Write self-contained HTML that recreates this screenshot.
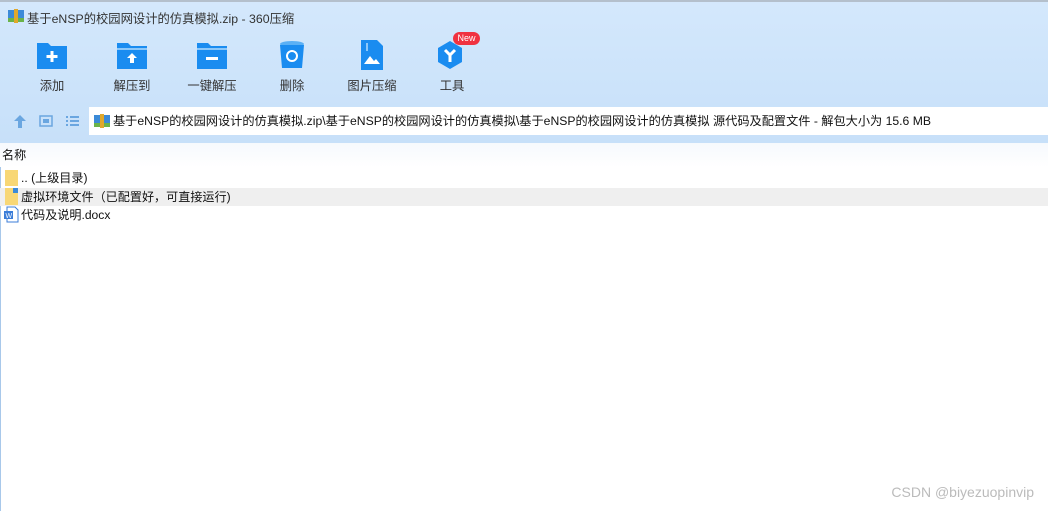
<!DOCTYPE html>
<html><head><meta charset="utf-8"><style>
*{margin:0;padding:0;box-sizing:border-box}
body{width:1048px;height:511px;overflow:hidden;background:#fff;font-family:"Liberation Sans","Noto Sans CJK SC",sans-serif;font-size:12px;color:#222;position:relative}
.top{position:absolute;left:0;top:0;width:1048px;height:143px;background:linear-gradient(#d4e8fc,#c7e0f9)}
.topline{position:absolute;left:0;top:0;width:1048px;height:2px;background:#b4c0cc}
.title{position:absolute;left:27px;top:9px;font-size:12.3px;color:#333}
.tb{position:absolute;top:40px;width:80px;text-align:center;font-size:12.3px;color:#333}
.tb svg{display:block;margin:0 auto 6px}
.addr{position:absolute;left:89px;top:107px;width:959px;height:28px;background:#fff;font-size:12.2px;line-height:28px;padding-left:24px;color:#111}
.hdr{position:absolute;left:0;top:143px;width:1048px;height:24px;background:linear-gradient(#f6f9fd,#fff)}
.row{position:absolute;left:0;height:18px;line-height:18px;font-size:12.1px;color:#111}
.wm{position:absolute;right:14px;top:484px;font-size:14px;color:#bbb}
</style></head><body>
<div class="top"></div><div class="topline"></div>
<div style="position:absolute;left:0;top:143px;width:1px;height:368px;background:#a8c8ea"></div>
<svg style="position:absolute;left:8px;top:8px" width="16" height="16"><rect x="0" y="2" width="16" height="12" fill="#3b8ad8"/><rect x="0" y="10" width="16" height="4" fill="#6bb34a"/><rect x="6" y="1" width="4" height="14" fill="#e0a82c"/></svg>
<div class="title">基于eNSP的校园网设计的仿真模拟.zip - 360压缩</div>

<div class="tb" style="left:12px"><svg width="32" height="30"><path d="M1 3h11l3 3h16v23H1z" fill="#1a8cf0"/><path d="M16 11v11M10.5 16.5h11" stroke="#fff" stroke-width="3"/></svg>添加</div>
<div class="tb" style="left:92px"><svg width="32" height="30"><path d="M1 3h11l3 3h16v23H1z" fill="#1a8cf0"/><rect x="1" y="8" width="30" height="2" fill="#8cc8fa"/><path d="M16 13l-5 5h3v5h4v-5h3z" fill="#fff"/></svg>解压到</div>
<div class="tb" style="left:172px"><svg width="32" height="30"><path d="M1 3h11l3 3h16v23H1z" fill="#1a8cf0"/><rect x="1" y="8" width="30" height="2" fill="#8cc8fa"/><rect x="10" y="17" width="12" height="3" fill="#fff"/></svg>一键解压</div>
<div class="tb" style="left:252px"><svg width="32" height="30"><ellipse cx="16" cy="4" rx="12" ry="3" fill="#5ab0f5"/><path d="M4 5h24l-2 23H6z" fill="#1a8cf0"/><circle cx="16" cy="16" r="5" fill="none" stroke="#fff" stroke-width="2"/></svg>删除</div>
<div class="tb" style="left:332px"><svg width="32" height="30"><path d="M5 0h16l6 6v24H5z" fill="#1a8cf0"/><path d="M8 24l6-8 4 5 2-2 4 5z" fill="#fff"/><rect x="10" y="3" width="2" height="8" fill="#8cc8fa"/></svg>图片压缩</div>
<div class="tb" style="left:412px"><svg width="36" height="30"><path d="M16 1l12 7v14l-12 7-12-7V8z" fill="#1a8cf0"/><path d="M11 10l5 5 5-5M16 15v7" stroke="#fff" stroke-width="3" fill="none"/></svg>工具</div>
<div style="position:absolute;left:453px;top:32px;width:27px;height:13px;border-radius:7px;background:#f03240;color:#fff;font-size:9px;line-height:13px;text-align:center">New</div>

<svg style="position:absolute;left:12px;top:113px" width="70" height="16"><path d="M8 2l6 6h-4v7H6V8H2z" fill="#6aa6e0"/><rect x="28" y="3" width="12" height="10" fill="none" stroke="#6aa6e0" stroke-width="1.5"/><rect x="31" y="6" width="6" height="4" fill="#6aa6e0"/><g fill="#6aa6e0"><rect x="54" y="3" width="2" height="2"/><rect x="58" y="3" width="9" height="2"/><rect x="54" y="7" width="2" height="2"/><rect x="58" y="7" width="9" height="2"/><rect x="54" y="11" width="2" height="2"/><rect x="58" y="11" width="9" height="2"/></g></svg>
<div class="addr">基于eNSP的校园网设计的仿真模拟.zip\基于eNSP的校园网设计的仿真模拟\基于eNSP的校园网设计的仿真模拟 源代码及配置文件 - 解包大小为 15.6 MB</div>
<svg style="position:absolute;left:94px;top:113px" width="16" height="16"><rect x="0" y="2" width="16" height="12" fill="#3b8ad8"/><rect x="0" y="10" width="16" height="4" fill="#6bb34a"/><rect x="6" y="1" width="4" height="14" fill="#e0a82c"/></svg>
<div class="hdr"></div>
<div class="row" style="top:146px;left:2px">名称</div>
<svg style="position:absolute;left:5px;top:170px" width="13" height="16"><rect width="13" height="16" fill="#f8d775"/></svg>
<div class="row" style="top:169px;left:21px">.. (上级目录)</div>
<div style="position:absolute;left:0;top:188px;width:1048px;height:18px;background:#efefef"></div>
<svg style="position:absolute;left:5px;top:188px" width="13" height="17"><rect width="13" height="17" fill="#f8d775"/><rect x="8" y="0" width="5" height="5" fill="#3b8ad8"/></svg>
<div class="row" style="top:188px;left:21px">虚拟环境文件（已配置好，可直接运行)</div>
<svg style="position:absolute;left:3px;top:206px" width="16" height="17"><path d="M4 1h8l3 3v12H4z" fill="#fff" stroke="#3b7dd8"/><rect x="1" y="5" width="9" height="8" fill="#3b7dd8"/><text x="2.5" y="12" font-size="7" fill="#fff" font-family="Liberation Sans">W</text></svg>
<div class="row" style="top:206px;left:21px">代码及说明.docx</div>
<div class="wm">CSDN @biyezuopinvip</div>
</body></html>
